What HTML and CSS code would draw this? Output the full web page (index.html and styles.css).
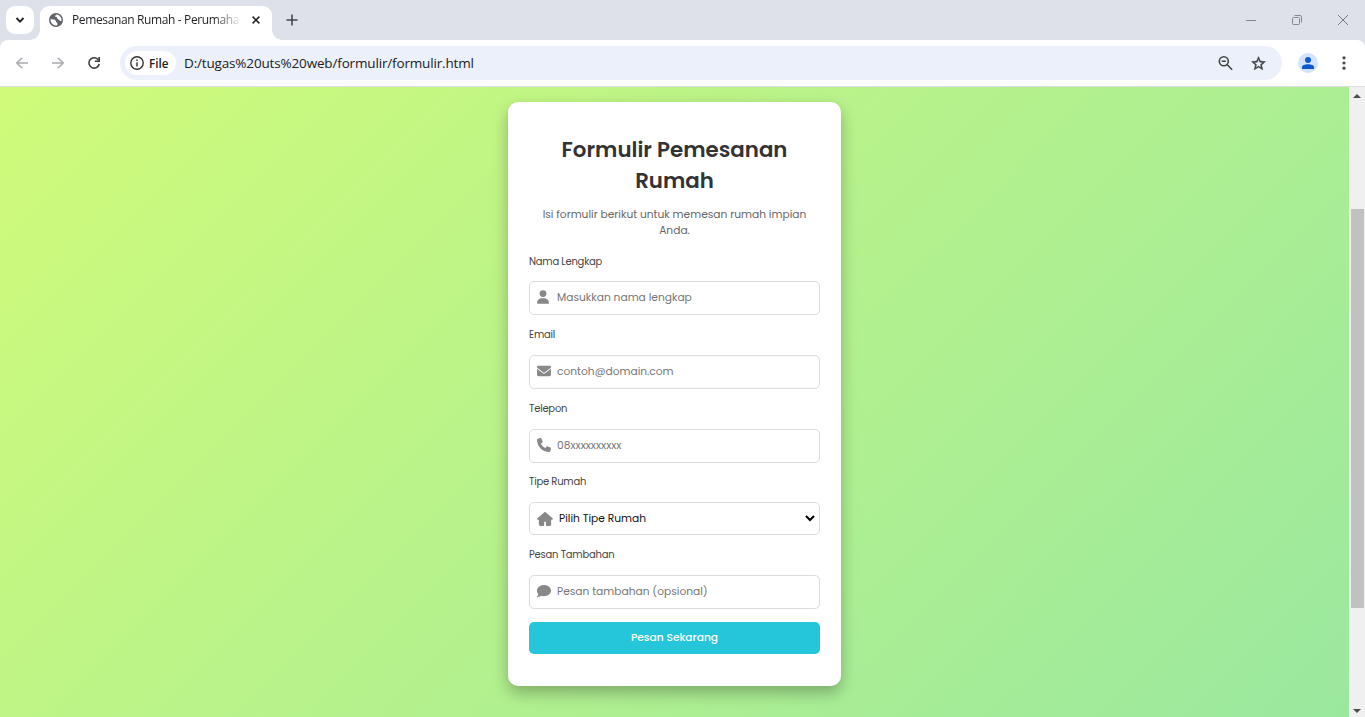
FILE: index.html
```html
<!DOCTYPE html>
<html lang="id">
<head>
<meta charset="utf-8">
<title>Pemesanan Rumah - Perumahan</title>
<link rel="stylesheet" href="styles.css">
</head>
<body>
<div class="window">
  <header class="tabstrip">
    <div class="tab-search"><svg width="10" height="10" viewBox="0 0 10 10"><path d="M1.5 3l3.5 3.6L8.500 3" fill="none" stroke="#1f2023" stroke-width="1.8"/></svg></div>
    <div class="tab">
      <svg class="globe" width="14" height="14" viewBox="0 0 14 14"><circle cx="7" cy="7" r="7" fill="#5f6368"/><path d="M1.500 6.300l4 .2 1.500 1.500v1.300l1.300.3v2.700a5.500 5.500 0 0 1-6.800-6zM8 1.600c-1.200.5-2 1-1.800 2.200l1.600.3.500 1.600 1.500.7 1.200 1.500 1.400.2A5.500 5.500 0 0 0 8 1.600z" fill="#fff"/></svg>
      <span class="tab-title">Pemesanan Rumah - Perumaha</span>
      <svg class="tab-close" width="8" height="8" viewBox="0 0 8 8"><path d="M.6.6l6.800 6.800M7.400.6L.6 7.400" stroke="#1f2023" stroke-width="1.500"/></svg>
    </div>
    <svg class="plus" width="12" height="12" viewBox="0 0 12 12"><path d="M6 .5v11M.5 6h11" stroke="#44474b" stroke-width="1.600"/></svg>
    <div class="controls">
      <svg width="10" height="10" viewBox="0 0 10 10"><path d="M0 5.500h10" stroke="#85888d"/></svg>
      <svg width="10" height="10" viewBox="0 0 10 10" fill="none" stroke="#85888d"><rect x=".5" y="2.500" width="7" height="7" rx="1"/><path d="M2.500.5H8a1.500 1.500 0 0 1 1.500 1.500v5.500"/></svg>
      <svg width="10" height="10" viewBox="0 0 10 10"><path d="M0 0l10 10M10 0L0 10" stroke="#75787d"/></svg>
    </div>
  </header>
  <nav class="toolbar">
    <svg class="back" width="12" height="12" viewBox="0 0 12 12" fill="none" stroke="#a9abae" stroke-width="1.500"><path d="M12 6H1M6.200.7L.9 6l5.300 5.300"/></svg>
    <svg class="forward" width="12" height="12" viewBox="0 0 12 12" fill="none" stroke="#a9abae" stroke-width="1.500"><path d="M0 6h11M5.800.7L11.100 6l-5.300 5.300"/></svg>
    <svg class="reload" width="14" height="14" viewBox="0 0 14 14" fill="none" stroke="#3c3d40" stroke-width="1.600"><path d="M11.400 4A5.200 5.200 0 1 0 12.200 8"/><path d="M12.200 1v4.300H7.800"/></svg>
    <div class="address">
      <div class="chip"><svg width="14" height="14" viewBox="0 0 14 14"><circle cx="7" cy="7" r="6.200" fill="none" stroke="#303134" stroke-width="1.400"/><path d="M7 6.200v4.200M7 3.500v1.500" stroke="#303134" stroke-width="1.400"/></svg><span>File</span></div>
      <span class="url">D:/tugas%20uts%20web/formulir/formulir.html</span>
      <svg class="zoom" width="15" height="15" viewBox="0 0 15 15" fill="none" stroke="#414347" stroke-width="1.600"><circle cx="5.800" cy="5.300" r="4.500"/><path d="M9 8.500l5.200 5.200M3.700 5.300h4.200"/></svg>
      <svg class="star" width="17" height="17" viewBox="0 0 24 24"><path d="M22 9.240l-7.190-.62L12 2 9.190 8.630 2 9.240l5.460 4.730L5.820 21 12 17.270 18.180 21l-1.630-7.030L22 9.240zM12 15.400l-3.760 2.270 1-4.280-3.320-2.880 4.380-.38L12 6.100l1.710 4.040 4.380.38-3.320 2.880 1 4.280L12 15.400z" fill="#3c3e42" stroke="#3c3e42" stroke-width=".5"/></svg>
    </div>
    <div class="avatar"><svg width="12" height="12" viewBox="0 0 12 12" fill="#0b57d0"><circle cx="6" cy="3" r="3"/><path d="M0 12v-1.800C0 8.200 3 7.300 6 7.300s6 .9 6 2.900V12z"/></svg></div>
    <svg class="menu" width="4" height="14" viewBox="0 0 4 14" fill="#46484c"><circle cx="2" cy="1.800" r="1.600"/><circle cx="2" cy="7" r="1.600"/><circle cx="2" cy="12.200" r="1.600"/></svg>
  </nav>
  <div class="viewport">
    <main class="page">
      <form class="card">
        <h1 class="title">Formulir Pemesanan<br>Rumah</h1>
        <p class="intro">Isi formulir berikut untuk memesan rumah impian<br>Anda.</p>
        <div class="field first">
          <label class="label">Nama Lengkap</label>
          <div class="box"><svg width="12" height="14" viewBox="0 0 448 512"><path d="M224 256A128 128 0 1 0 224 0a128 128 0 1 0 0 256zm-45.700 48C79.800 304 0 383.800 0 482.300C0 498.700 13.300 512 29.700 512H418.300c16.400 0 29.700-13.300 29.700-29.700C448 383.800 368.200 304 269.700 304H178.300z"/></svg><span class="hint">Masukkan nama lengkap</span></div>
        </div>
        <div class="field">
          <label class="label">Email</label>
          <div class="box"><svg width="14" height="14" viewBox="0 0 512 512"><path d="M48 64C21.500 64 0 85.500 0 112c0 15.100 7.100 29.300 19.200 38.400L236.800 313.600c11.400 8.500 27 8.500 38.400 0L492.800 150.400c12.100-9.100 19.200-23.300 19.200-38.400c0-26.500-21.500-48-48-48H48zM0 176V384c0 35.300 28.700 64 64 64H448c35.300 0 64-28.700 64-64V176L294.400 339.200c-22.800 17.100-54 17.100-76.800 0L0 176z"/></svg><span class="hint">contoh@domain.com</span></div>
        </div>
        <div class="field">
          <label class="label">Telepon</label>
          <div class="box"><svg width="14" height="14" viewBox="0 0 512 512"><path d="M164.900 24.600c-7.700-18.600-28-28.500-47.400-23.200l-88 24C12.100 30.200 0 46 0 64C0 311.400 200.600 512 448 512c18 0 33.800-12.100 38.600-29.500l24-88c5.300-19.400-4.600-39.700-23.200-47.400l-96-40c-16.300-6.800-35.200-2.100-46.300 11.600L304.700 368C234.300 334.700 177.300 277.700 144 207.300L193.300 167c13.700-11.200 18.400-30 11.600-46.300l-40-96z"/></svg><span class="hint">08xxxxxxxxxx</span></div>
        </div>
        <div class="field select">
          <label class="label">Tipe Rumah</label>
          <div class="box"><svg width="16" height="14" viewBox="0 0 576 512"><path d="M575.800 255.500c0 18-15 32.100-32 32.100h-32l.7 160.200c0 36-22 64.200-56 64.200H352c-17 0-32-14-32-32V352h-64v128c0 18-14 32-32 32H128c-36 0-64-28-64-64V287.600H32c-18 0-32-14-32-32.100c0-9 3-17 10-24L266.400 8c7-7 15-8 22-8s15 2 21 7L564.800 231.500c8 7 12 15 11 24z"/></svg><span class="choice">Pilih Tipe Rumah</span><svg class="arrow" width="10" height="7" viewBox="0 0 10 7"><path d="M1 1l4 4 4-4" fill="none" stroke="#000" stroke-width="2"/></svg></div>
        </div>
        <div class="field">
          <label class="label">Pesan Tambahan</label>
          <div class="box"><svg width="14" height="14" viewBox="0 0 512 512"><path d="M512 240c0 114.900-114.600 208-256 208c-37.100 0-72.300-6.400-104.100-17.900c-11.900 8.700-31.300 20.600-54.300 30.600C73.600 471.100 44.700 480 16 480c-6.500 0-12.300-3.900-14.800-9.900c-2.500-6-1.100-12.800 3.400-17.400c9-10 25-30 33-49c4-11 7-22 7-33C17 335 0 289 0 240C0 125.100 114.600 32 256 32s256 93.100 256 208z"/></svg><span class="hint">Pesan tambahan (opsional)</span></div>
        </div>
        <button type="button" class="submit">Pesan Sekarang</button>
      </form>
    </main>
    <div class="scrollbar">
      <svg width="8" height="5" viewBox="0 0 8 5"><path d="M4 0l4 4H0z" fill="#4d4d4d"/></svg>
      <div class="thumb"></div>
      <svg class="down" width="8" height="5" viewBox="0 0 8 5"><path d="M0 0h8L4 4z" fill="#4d4d4d"/></svg>
    </div>
  </div>
</div>
</body>
</html>
```
FILE: styles.css
```css
* { box-sizing: border-box; }
body { margin: 0; overflow: hidden; font-family: "Poppins", "Inter", sans-serif; }
svg { display: block; flex: none; }
.window { width: 1365px; height: 717px; display: flex; flex-direction: column; background: #dee1e9; }
.tabstrip { height: 40px; flex: none; display: flex; align-items: flex-start; font-family: "Open Sans", sans-serif; }
.tab-search { width: 28px; height: 28px; margin: 6px 6px 0; border-radius: 9px; background: #fff; display: flex; align-items: center; justify-content: center; }
.tab { position: relative; width: 232px; height: 34px; margin-top: 6px; padding: 0 12px 6px 9px; background: #fff; border-radius: 9px 9px 0 0; display: flex; align-items: center; }
.tab::before, .tab::after { content: ""; position: absolute; bottom: 0; width: 10px; height: 10px; }
.tab::before { left: -10px; background: radial-gradient(circle at 0 0, transparent 9.5px, #fff 10px); }
.tab::after { right: -10px; background: radial-gradient(circle at 100% 0, transparent 9.5px, #fff 10px); }
.tab-title { width: 168px; margin-left: 9px; white-space: nowrap; font-size: 12px; line-height: 18px; color: #1f2023; letter-spacing: -.37px; -webkit-mask-image: linear-gradient(90deg, #000 142px, transparent 170px); mask-image: linear-gradient(90deg, #000 142px, transparent 170px); }
.tab-close { margin-left: 12px; }
.plus { margin: 14px 0 0 14px; }
.controls { margin: 15px 17px 0 auto; display: flex; gap: 36px; }
.toolbar { height: 47px; flex: none; display: flex; align-items: center; background: #fff; border-bottom: 1px solid #dcdee2; border-radius: 8px 8px 0 0; }
.back { margin-left: 16px; }
.forward { margin-left: 24px; }
.reload { margin-left: 23px; }
.address { width: 1162px; height: 34px; margin-left: 19px; padding: 0 15px 0 5px; border-radius: 17px; background: #ecf0fa; display: flex; align-items: center; font-family: "Open Sans", sans-serif; color: #202124; }
.chip { width: 51px; height: 24px; padding-left: 5px; border-radius: 12px; background: #fff; display: flex; align-items: center; gap: 5px; font-size: 11.700px; font-weight: 600; }
.url { margin-left: 8px; font-size: 13.500px; letter-spacing: -.16px; }
.zoom { margin-left: auto; }
.star { margin-left: 17px; }
.avatar { width: 20px; height: 20px; margin-left: 16px; border-radius: 50%; background: #d3e3fd; display: flex; align-items: center; justify-content: center; }
.menu { margin-left: 24px; }
.viewport { height: 630px; display: flex; }
.page { width: 1349px; padding-top: 15px; background: linear-gradient(135deg, #d0fb7a, #9ae89f); }
.card { width: 333px; height: 584px; margin: 0 auto; padding: 32px 21px; border-radius: 10px; background: #fff; box-shadow: 0 7px 16px rgba(0, 0, 0, .28); display: flex; flex-direction: column; }
.title { margin: 0; height: 62px; font-size: 21.333px; line-height: 31px; font-weight: 600; color: #333; text-align: center; white-space: nowrap; }
.intro { margin: 11px 0 13px; height: 32px; font-size: 10.667px; line-height: 16px; color: #666; text-align: center; white-space: nowrap; }
.field { margin-top: 10px; }
.select { margin-top: 9px; }
.field.first { margin-top: 0; }
.label { display: block; height: 20px; margin-bottom: 10px; font-size: 10px; line-height: 20px; letter-spacing: -.23px; color: #444; }
.first .label { margin-bottom: 9px; }
.box { height: 34px; padding: 0 4px 0 7px; border: 1px solid #dcdcdc; border-radius: 5px; background: #fff; display: flex; align-items: center; fill: #888; white-space: nowrap; }
.select .box { height: 33px; }
.box svg { margin-top: -2px; }
.select .box svg { margin-top: 0; }
.hint { margin: 0 0 0 6px; font-size: 10.667px; color: #757575; }
.first .hint { margin-left: 8px; }
.choice { margin-left: 6px; font-size: 10.667px; color: #111; }
.box .arrow { margin-left: auto; }
.submit { height: 32px; margin: 13px 0 0; padding: 0; border: 0; border-radius: 5px; background: #26c6da; color: #fff; font: 500 10.667px "Poppins", "Inter", sans-serif; }
.scrollbar { width: 16px; background: #f0f0f0; display: flex; flex-direction: column; align-items: center; padding: 7px 0 3px; }
.thumb { width: 13px; height: 399px; margin: 110px 0 0 1px; background: #c1c1c1; }
.down { margin-top: auto; }
```
